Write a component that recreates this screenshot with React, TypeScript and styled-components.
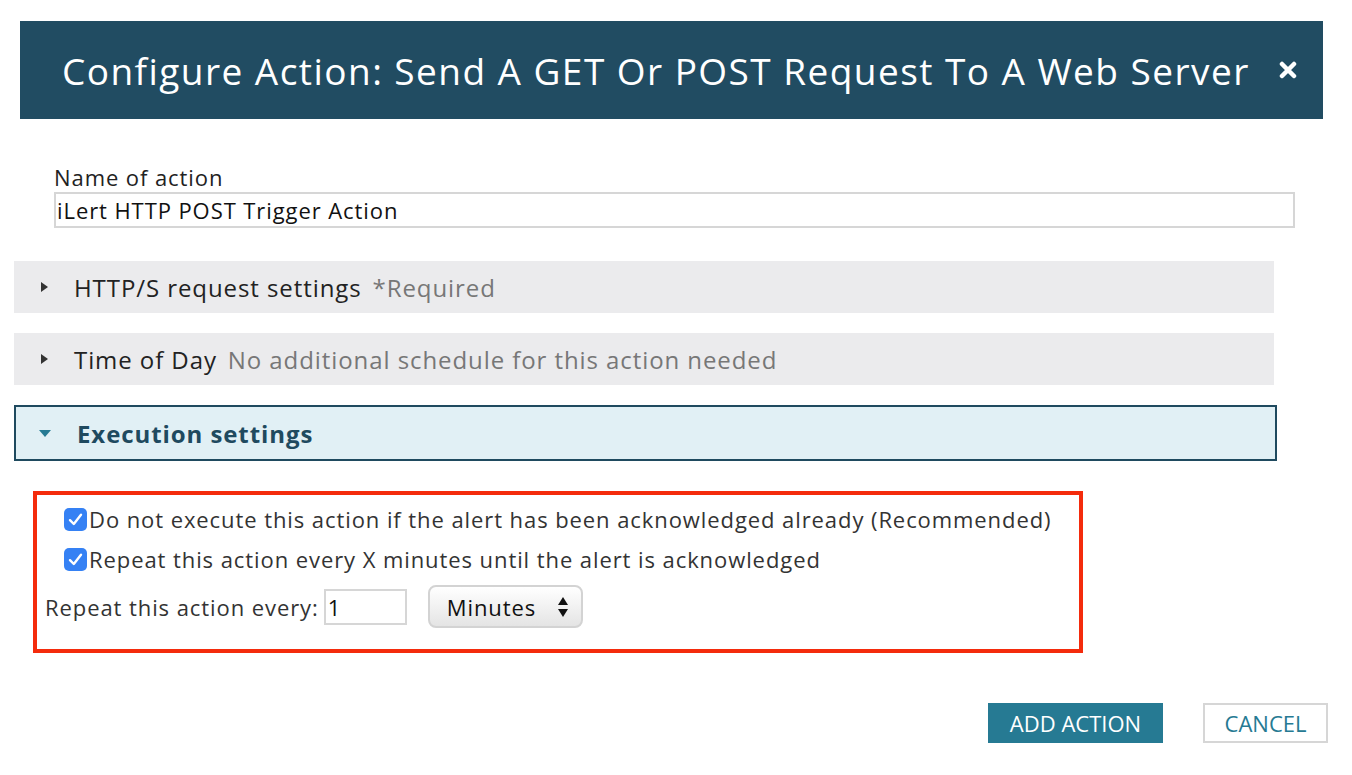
import React from 'react';
import styled, { createGlobalStyle } from 'styled-components';

const GlobalStyle = createGlobalStyle`
  body {
    margin: 0;
    background: #ffffff;
    font-family: 'Open Sans', 'Noto Sans', sans-serif;
    color: #222;
    letter-spacing: 0.92px;
  }
`;

const Page = styled.div`
  width: 1352px;
  height: 775px;
  overflow: hidden;
`;

const Header = styled.div`
  margin: 21px 29px 0 20px;
  height: 98px;
  background-color: #214c62;
  display: flex;
  align-items: center;
  justify-content: space-between;
  padding: 0 26px 0 42px;
  box-sizing: border-box;
`;

const Title = styled.h1`
  margin: 0;
  font-size: 37px;
  font-weight: 400;
  color: #ffffff;
  letter-spacing: 1.45px;
  white-space: nowrap;
`;

const CloseButton = styled.button`
  border: none;
  background: none;
  padding: 0;
  width: 18px;
  height: 18px;
  cursor: pointer;
  display: flex;
`;

const NameBlock = styled.div`
  margin: 43px 0 0 54px;
  width: 1241px;
`;

const Label = styled.div`
  font-size: 22px;
  line-height: 30px;
  color: #222;
`;

const TextInput = styled.input`
  width: 100%;
  height: 36px;
  box-sizing: border-box;
  border: 2px solid #d6d6d6;
  padding: 0 1px;
  font-family: inherit;
  font-size: 22px;
  letter-spacing: 0.92px;
  color: #111;
  outline: none;
`;

const Sections = styled.div`
  margin: 33px 0 0 14px;
  display: flex;
  flex-direction: column;
  gap: 20px;
`;

const SectionRow = styled.div<{ $open?: boolean }>`
  width: ${(p) => (p.$open ? '1263px' : '1260px')};
  height: ${(p) => (p.$open ? '56px' : '52px')};
  box-sizing: border-box;
  display: flex;
  align-items: center;
  padding-left: ${(p) => (p.$open ? '23px' : '27px')};
  background-color: ${(p) => (p.$open ? '#e1f0f5' : '#ebebed')};
  border: ${(p) => (p.$open ? '2px solid #1f4a5f' : 'none')};
  font-size: 24px;
  white-space: nowrap;
`;

const Caret = styled.span<{ $open?: boolean }>`
  width: 0;
  height: 0;
  margin-right: 26px;
  ${(p) =>
    p.$open
      ? `border-left: 6px solid transparent;
         border-right: 6px solid transparent;
         border-top: 7px solid #267a93;`
      : `border-top: 5px solid transparent;
         border-bottom: 5px solid transparent;
         border-left: 7px solid #333;`}
`;

const SectionTitle = styled.span<{ $open?: boolean }>`
  color: ${(p) => (p.$open ? '#1f4a5f' : '#222')};
  font-weight: ${(p) => (p.$open ? 700 : 400)};
`;

const SectionHint = styled.span`
  color: #777;
  margin-left: 11px;
`;

const HighlightBox = styled.div`
  margin: 30px 0 0 33px;
  width: 1050px;
  height: 162px;
  box-sizing: border-box;
  border: 4px solid #f42b0c;
  padding: 9px 0 0 8px;
`;

const CheckRow = styled.label`
  display: flex;
  align-items: center;
  margin-left: 19px;
  height: 30px;
  font-size: 22px;
  color: #333;
  white-space: nowrap;
  & + & {
    margin-top: 10px;
  }
`;

const CheckBox = styled.span`
  width: 23px;
  height: 23px;
  border-radius: 5px;
  background-color: #3581f4;
  display: flex;
  align-items: center;
  justify-content: center;
  margin-right: 2px;
  flex-shrink: 0;
`;

const RepeatRow = styled.div`
  display: flex;
  align-items: center;
  margin-top: 11px;
  font-size: 22px;
  color: #333;
  white-space: nowrap;
`;

const SmallInput = styled.input`
  width: 83px;
  height: 36px;
  box-sizing: border-box;
  border: 2px solid #d6d6d6;
  margin-left: 5px;
  padding: 0 2px;
  font-family: inherit;
  font-size: 22px;
  color: #111;
  outline: none;
`;

const SelectBox = styled.div`
  margin-left: 21px;
  width: 155px;
  height: 43px;
  box-sizing: border-box;
  border: 2px solid #d3d3d3;
  border-radius: 8px;
  background: linear-gradient(#ffffff 0%, #f3f3f3 45%, #e4e4e4 100%);
  display: flex;
  align-items: center;
  justify-content: space-between;
  padding: 0 12px 0 17px;
  font-size: 22px;
  color: #111;
`;

const Footer = styled.div`
  margin: 50px 24px 0 0;
  display: flex;
  justify-content: flex-end;
  gap: 40px;
`;

const Button = styled.button<{ $primary?: boolean }>`
  height: 40px;
  box-sizing: border-box;
  padding: 0;
  width: ${(p) => (p.$primary ? '175px' : '125px')};
  font-family: inherit;
  font-size: 22px;
  letter-spacing: 0;
  text-transform: uppercase;
  background-color: ${(p) => (p.$primary ? '#267a93' : '#ffffff')};
  color: ${(p) => (p.$primary ? '#ffffff' : '#267a93')};
  border: ${(p) => (p.$primary ? 'none' : '2px solid #d6d6d6')};
  cursor: pointer;
`;

const Check = () => (
  <svg width="15" height="13" viewBox="0 0 15 13">
    <path d="M2 7.2 L5.8 11 L13 1.8" fill="none" stroke="#fff" strokeWidth="2.4" strokeLinecap="round" strokeLinejoin="round" />
  </svg>
);

const Arrows = () => (
  <svg width="12" height="22" viewBox="0 0 12 22">
    <path d="M6 1 L11 9 L1 9 Z" fill="#111" />
    <path d="M6 21 L11 13 L1 13 Z" fill="#111" />
  </svg>
);

function App() {
  return (
    <Page>
      <GlobalStyle />
      <Header>
        <Title>Configure Action: Send A GET Or POST Request To A Web Server</Title>
        <CloseButton aria-label="close">
          <svg width="18" height="18" viewBox="0 0 18 18">
            <path d="M3 3 L15 15 M15 3 L3 15" stroke="#fff" strokeWidth="4.5" strokeLinecap="round" />
          </svg>
        </CloseButton>
      </Header>

      <NameBlock>
        <Label>Name of action</Label>
        <TextInput defaultValue="iLert HTTP POST Trigger Action" />
      </NameBlock>

      <Sections>
        <SectionRow>
          <Caret />
          <SectionTitle>HTTP/S request settings</SectionTitle>
          <SectionHint>*Required</SectionHint>
        </SectionRow>
        <SectionRow>
          <Caret />
          <SectionTitle>Time of Day</SectionTitle>
          <SectionHint>No additional schedule for this action needed</SectionHint>
        </SectionRow>
        <SectionRow $open>
          <Caret $open />
          <SectionTitle $open>Execution settings</SectionTitle>
        </SectionRow>
      </Sections>

      <HighlightBox>
        <CheckRow>
          <CheckBox>
            <Check />
          </CheckBox>
          Do not execute this action if the alert has been acknowledged already (Recommended)
        </CheckRow>
        <CheckRow>
          <CheckBox>
            <Check />
          </CheckBox>
          Repeat this action every X minutes until the alert is acknowledged
        </CheckRow>
        <RepeatRow>
          Repeat this action every:
          <SmallInput defaultValue="1" />
          <SelectBox>
            Minutes
            <Arrows />
          </SelectBox>
        </RepeatRow>
      </HighlightBox>

      <Footer>
        <Button $primary>Add Action</Button>
        <Button>Cancel</Button>
      </Footer>
    </Page>
  );
}

export default App;
